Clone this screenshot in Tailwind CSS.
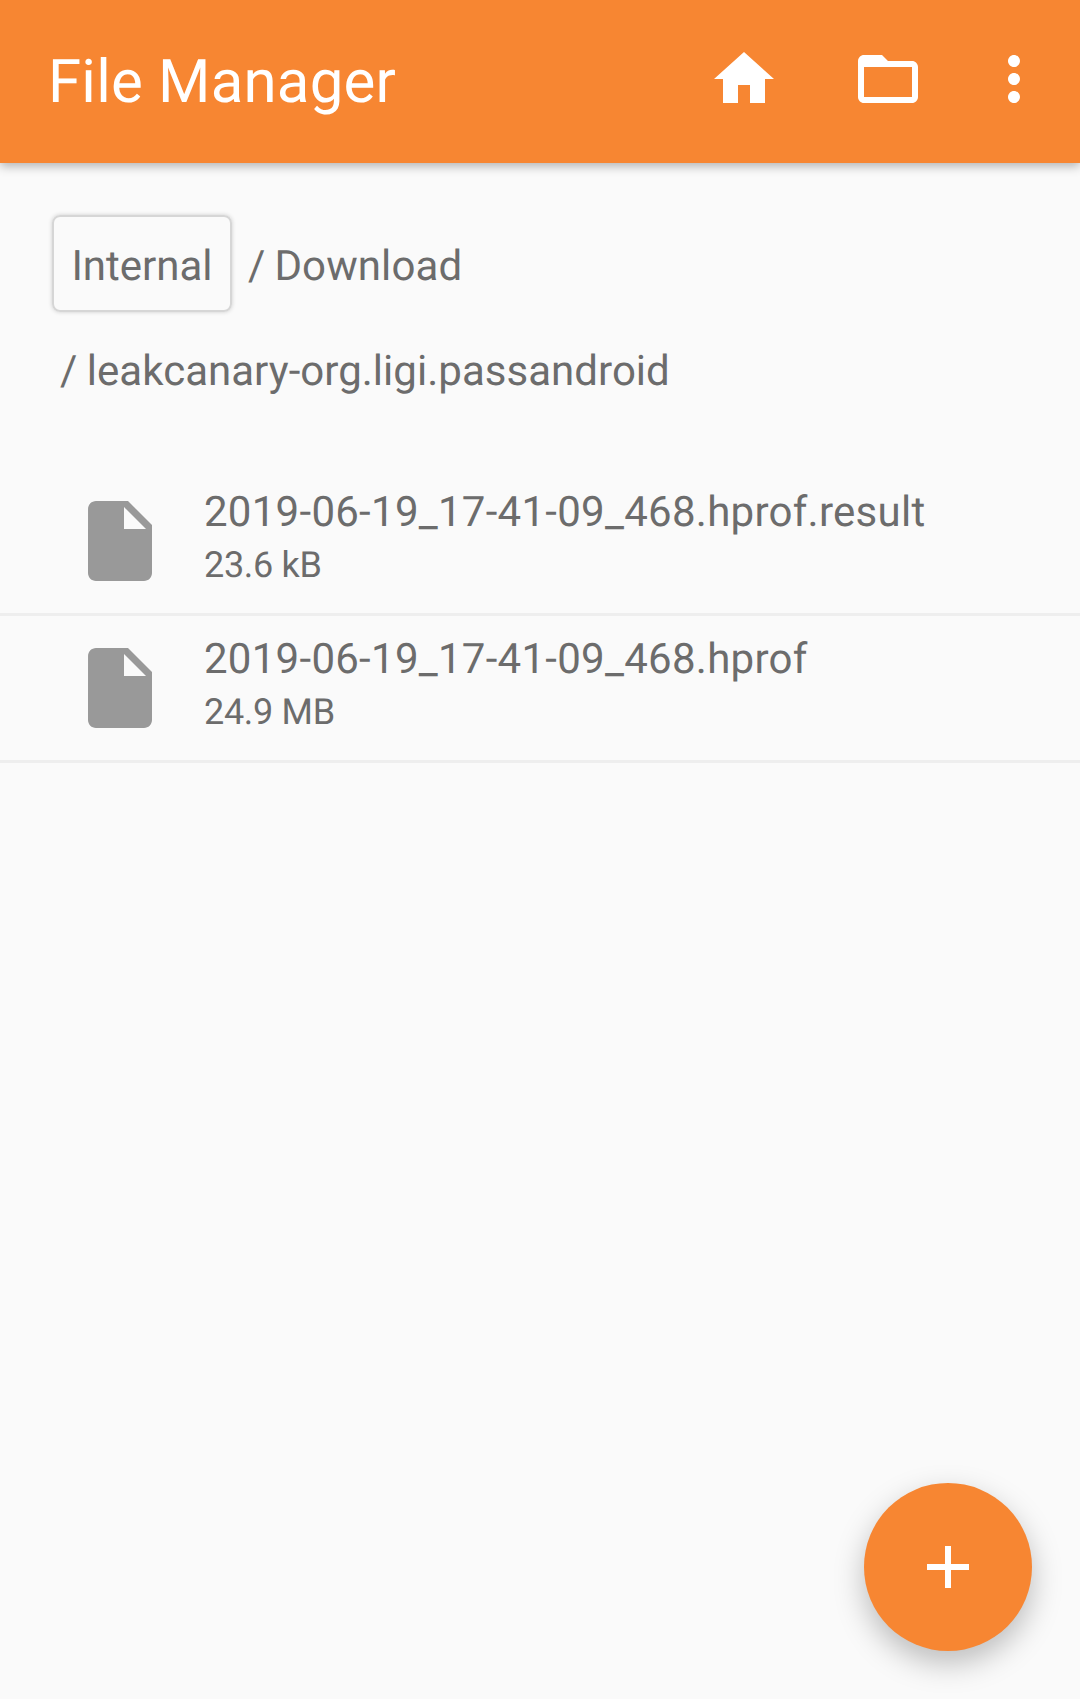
<!DOCTYPE html>
<html lang="en">
<head>
  <meta charset="UTF-8">
  <meta name="viewport" content="width=device-width, initial-scale=1">
  <title>File Manager</title>
  <script src="https://cdn.jsdelivr.net/npm/@tailwindcss/browser@4"></script>
</head>
<body class="bg-[#fafafa] font-[Roboto,sans-serif] text-[#6c6c6c] [text-rendering:geometricPrecision]">
  <div class="relative h-[1699px] w-[1080px] overflow-hidden">

    <!-- Toolbar -->
    <header class="relative z-10 flex h-[163px] items-center bg-[#f78632] pl-[48px] pr-[30px] shadow-[0_3px_10px_rgba(0,0,0,0.3)]">
      <h1 class="flex-1 text-[60px] leading-none font-normal tracking-[0.2px] text-white">File Manager</h1>
      <div class="flex items-center pb-[5px]">
        <svg class="h-[72px] w-[72px] fill-white" viewBox="0 0 24 24"><path d="M10 20v-6h4v6h5v-8h3L12 3 2 12h3v8z"/></svg>
        <svg class="ml-[72px] h-[72px] w-[72px] fill-white" viewBox="0 0 24 24"><path d="M20 6h-8l-2-2H4c-1.1 0-1.99.9-1.99 2L2 18c0 1.1.9 2 2 2h16c1.1 0 2-.9 2-2V8c0-1.1-.9-2-2-2zm0 12H4V8h16v10z"/></svg>
        <svg class="ml-[54px] h-[72px] w-[72px] fill-white" viewBox="0 0 24 24"><path d="M12 8c1.1 0 2-.9 2-2s-.9-2-2-2-2 .9-2 2 .9 2 2 2zm0 2c-1.1 0-2 .9-2 2s.9 2 2 2 2-.9 2-2-.9-2-2-2zm0 6c-1.1 0-2 .9-2 2s.9 2 2 2 2-.9 2-2-.9-2-2-2z"/></svg>
      </div>
    </header>

    <!-- Breadcrumb -->
    <nav class="pt-[52px] text-[42px] leading-[49px]">
      <div class="flex items-center pl-[52px]">
        <span class="flex h-[97px] w-[180px] items-center justify-center rounded-[8px] border-2 border-[#d6d6d6] pt-[6px] shadow-[0_0_4px_rgba(0,0,0,0.18)]">Internal</span>
        <span class="ml-[16px] pt-[6px] tracking-[0.1px] [word-spacing:-1.5px]">/ Download</span>
      </div>
      <div class="mt-[35px] pl-[60px] tracking-[0.03px] [word-spacing:-1px]">/ leakcanary-org.ligi.passandroid</div>
    </nav>

    <!-- File list -->
    <ul class="mt-[73px]">
      <li class="flex h-[147px] items-center border-b-[3px] border-[#eeeeee] pl-[88px]">
        <svg class="h-[80px] w-[64px] fill-[#999999]" viewBox="4 2 16 20"><path d="M6 2c-1.1 0-1.99.9-1.99 2L4 20c0 1.1.89 2 1.99 2H18c1.1 0 2-.9 2-2V8l-6-6H6zm7 7V3.5L18.5 9H13z"/></svg>
        <div class="ml-[52px] mt-[-9px]">
          <div class="text-[42px] leading-[49px] tracking-[0.27px]">2019-06-19_17-41-09_468.hprof.result</div>
          <div class="mt-[7px] text-[36px] leading-[42px] tracking-[-0.3px]">23.6 kB</div>
        </div>
      </li>
      <li class="flex h-[147px] items-center border-b-[3px] border-[#eeeeee] pl-[88px]">
        <svg class="h-[80px] w-[64px] fill-[#999999]" viewBox="4 2 16 20"><path d="M6 2c-1.1 0-1.99.9-1.99 2L4 20c0 1.1.89 2 1.99 2H18c1.1 0 2-.9 2-2V8l-6-6H6zm7 7V3.5L18.5 9H13z"/></svg>
        <div class="ml-[52px] mt-[-9px]">
          <div class="text-[42px] leading-[49px] tracking-[0.27px]">2019-06-19_17-41-09_468.hprof</div>
          <div class="mt-[7px] text-[36px] leading-[42px] tracking-[-0.3px]">24.9 MB</div>
        </div>
      </li>
    </ul>

    <!-- Add button -->
    <button class="absolute bottom-[48px] right-[48px] flex h-[168px] w-[168px] items-center justify-center rounded-full bg-[#f78632] shadow-[0_12px_30px_rgba(0,0,0,0.25)]">
      <svg class="h-[72px] w-[72px] fill-white" viewBox="0 0 24 24"><path d="M19 13h-6v6h-2v-6H5v-2h6V5h2v6h6v2z"/></svg>
    </button>
  </div>
</body>
</html>
